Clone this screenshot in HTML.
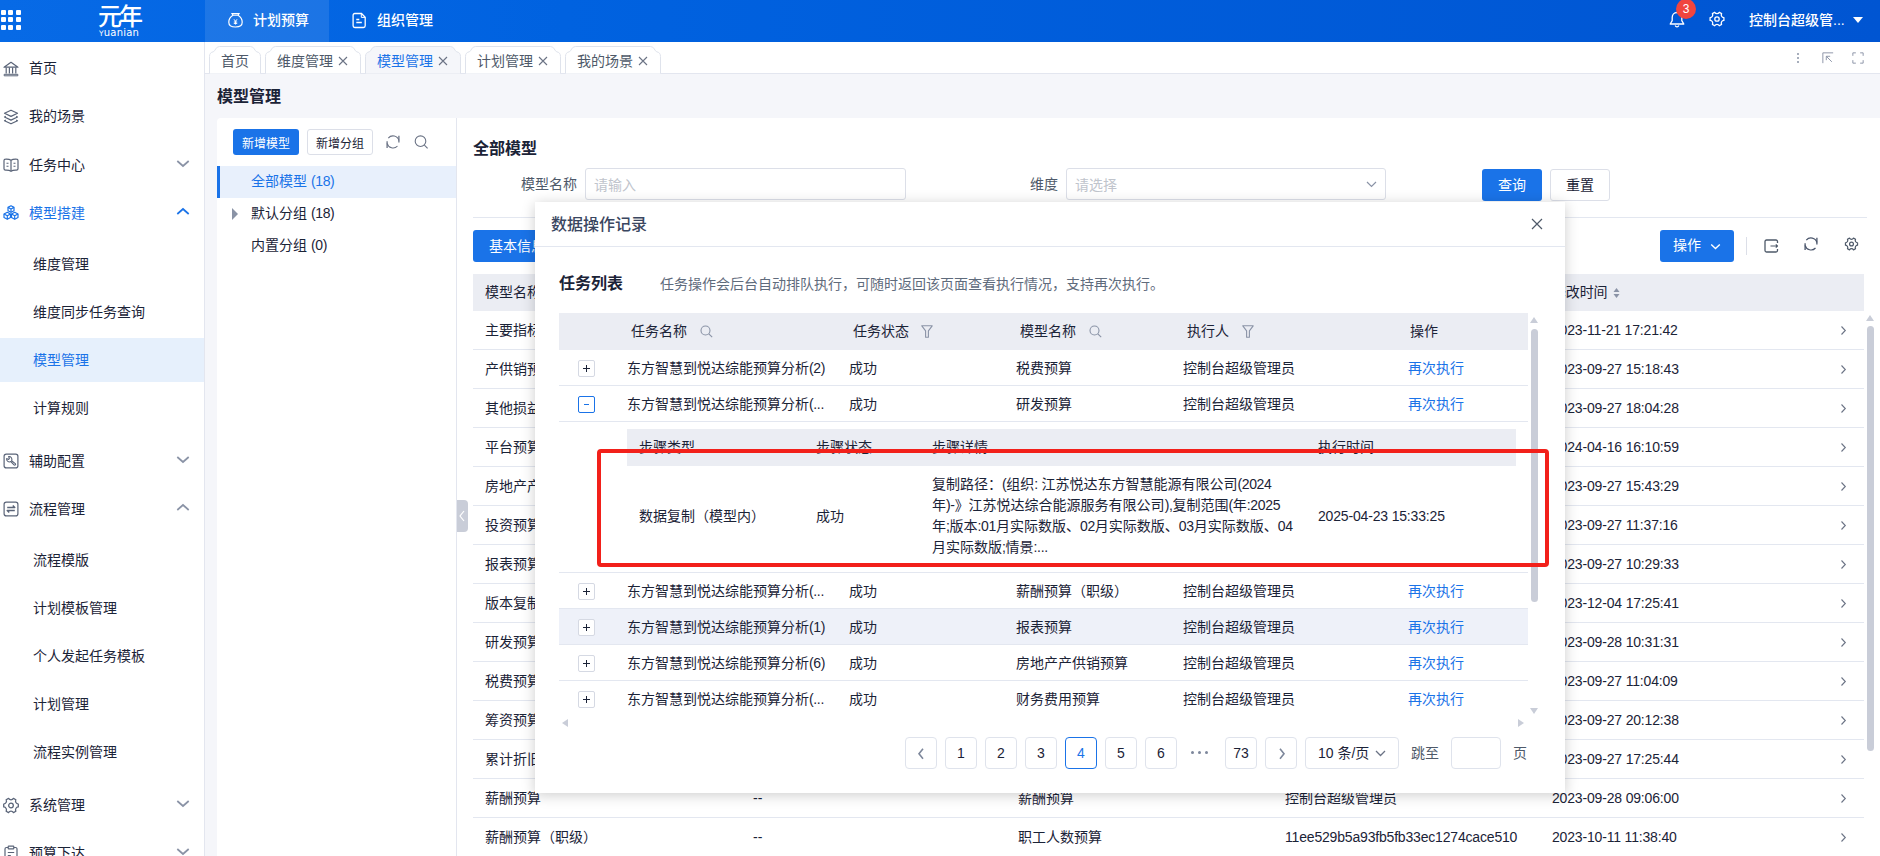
<!DOCTYPE html>
<html lang="zh-CN">
<head>
<meta charset="utf-8">
<title>模型管理</title>
<style>
*{box-sizing:border-box;margin:0;padding:0}
html,body{width:1880px;height:856px;overflow:hidden;background:#fff}
body{font-family:"Liberation Sans","Noto Sans CJK SC",sans-serif;font-size:14px;color:#1b2337;position:relative;-webkit-font-smoothing:antialiased}
.abs{position:absolute}
svg{display:block}
/* ---------- top bar ---------- */
#top{position:absolute;left:0;top:0;width:1880px;height:42px;background:linear-gradient(90deg,#076ae6 0%,#0062e0 30%,#0055d2 100%);color:#fff}
#top .grid{position:absolute;left:0;top:10px;width:21px;height:21px}
#top .grid i{position:absolute;width:5px;height:5px;background:#fff;border-radius:1px}
#top .logo{position:absolute;left:98px;top:2px;width:46px;height:36px}
#top .nav{position:absolute;top:0;height:42px;font-size:14px;line-height:40px;color:#fff;font-weight:500}
#top .nav.on{background:rgba(255,255,255,.1)}
#top .nav svg{position:absolute;top:12px}
/* ---------- sidebar ---------- */
#side{position:absolute;left:0;top:42px;width:205px;height:814px;background:#fff;border-right:1px solid #e3e6ef}
#side .it{position:absolute;left:0;width:204px;height:44px;line-height:44px;font-size:14px;color:#1b2337}
#side .it .t{position:absolute;left:29px;top:0;white-space:nowrap}
#side .it.sub .t{left:33px}
#side .it.act{background:#e6f0fc;color:#1a73e8}
#side .it.blue{color:#1a73e8}
#side .it svg.ic{position:absolute;left:3px;top:14px}
#side .it svg.ch{position:absolute;left:176px;top:16px}
/* ---------- tab strip ---------- */
#tabs{position:absolute;left:205px;top:42px;width:1675px;height:32px;background:#fff;border-bottom:1px solid #e3e6ef}
#tabs .tb{position:absolute;top:4px;height:28px;font-size:14px;line-height:30px;color:#4e5969;white-space:nowrap}
#tabs .tb.on{color:#1a73e8}
#tabs .tb .x{position:absolute;top:8px}
#main{position:absolute;left:205px;top:74px;width:1675px;height:782px;background:#f5f6fa}

/* ---------- main ---------- */
#main .ptitle{position:absolute;left:12px;top:10px;font-size:16px;font-weight:700;line-height:26px;color:#1b2337}
#card{position:absolute;left:12px;top:44px;width:1663px;height:738px;background:#fff;border-radius:4px 0 0 0}
#lp{position:absolute;left:0;top:0;width:240px;height:738px;border-right:1px solid #e3e6ef}
.btn{position:absolute;border-radius:3px;text-align:center;white-space:nowrap}
.btn.pri{background:#1a73e8;color:#fff}
.btn.def{background:#fff;border:1px solid #dcdfe8;color:#1b2337}
#lp .tr{position:absolute;left:0;width:239px;height:32px;line-height:31px;font-size:14px;color:#1b2337}
#lp .tr span{position:absolute;left:34px;white-space:nowrap}
#lp .tr.on{background:#e8f0fc;color:#1a73e8;border-left:3px solid #1a73e8}
#lp .tr.on span{left:31px}
#rp{position:absolute;left:240px;top:0;width:1423px;height:738px}
#rp .h2{position:absolute;left:16px;top:18px;font-size:16px;font-weight:700;line-height:26px}
#rp .lab{position:absolute;top:50px;height:32px;line-height:33px;font-size:14px;color:#4e5969}
#rp .inp{position:absolute;top:50px;height:32px;border:1px solid #dcdfe8;border-radius:3px;background:#fff;line-height:33px;font-size:14px;color:#c0c4cc;padding-left:8px}
#mt{position:absolute;left:16px;top:156px;width:1391px}
#mt .hd{position:absolute;left:0;top:0;width:1391px;height:37px;background:#ebedf3;line-height:36px;font-size:14px;color:#1b2337}
#mt .r{position:absolute;left:0;width:1391px;height:39px;border-bottom:1px solid #e3e7f0;line-height:38px;font-size:14px;color:#1b2337}
#mt span{position:absolute;top:0;white-space:nowrap}
#mt .c1{left:12px}#mt .c2{left:280px}#mt .c3{left:545px}#mt .c4{left:812px}#mt .c5{left:1079px;letter-spacing:-.17px}
#mt .ar{position:absolute;left:1366px;top:14px}

/* ---------- modal ---------- */
#md{position:absolute;left:535px;top:202px;width:1030px;height:591px;background:#fff;box-shadow:0 2px 13px rgba(0,0,0,.20);color:#1b2337}
#md .mh{position:absolute;left:0;top:0;width:1030px;height:45px;border-bottom:1px solid #e3e7f0}
#md .mh .tt{position:absolute;left:16px;top:10px;font-size:16px;font-weight:500;line-height:26px;color:#3a4660}
#md span{white-space:nowrap}
#tk{position:absolute;left:24px;top:111px;width:969px}
#tk .hd{position:absolute;left:0;top:0;width:969px;height:37px;background:#ebedf3;line-height:36px;font-size:14px}
#tk .hd span,#tk .r span{position:absolute;top:0}
#tk .r{position:absolute;left:0;width:969px;height:36px;border-bottom:1px solid #e3e7f0;line-height:36px;font-size:14px}
#tk .r.hl{background:#eef1f9}
#tk .ex{position:absolute;left:19px;top:10px;width:17px;height:17px;border:1px solid #d5d9e3;border-radius:2px;background:#fff}
#tk .ex.on{border-color:#1a73e8}
#tk .ex i{position:absolute;background:#1b2337}
#tk .ex.on i{background:#1a73e8}
#tk .a{color:#1a73e8}
#pg{position:absolute;left:0;top:535px;width:1030px;height:32px;font-size:14px;color:#1b2337}
#pg .b{position:absolute;top:0;width:32px;height:32px;border:1px solid #dfe3ec;border-radius:4px;background:#fff;text-align:center;line-height:30px}
#pg .b.on{border-color:#1a73e8;color:#1a73e8}
.n{letter-spacing:-.350px}
</style>
</head>
<body>
<!-- TOPBAR -->
<div id="top">
  <div class="grid">
    <i style="left:1px;top:0"></i><i style="left:8.300px;top:0"></i><i style="left:15.600px;top:0"></i>
    <i style="left:1px;top:7.400px"></i><i style="left:8.300px;top:7.400px"></i><i style="left:15.600px;top:7.400px"></i>
    <i style="left:1px;top:14.700px"></i><i style="left:8.300px;top:14.700px"></i><i style="left:15.600px;top:14.700px"></i>
  </div>
  <div class="logo">
    <div class="abs" style="left:0;top:1px;font-size:24px;line-height:28px;font-weight:500;letter-spacing:-3px;white-space:nowrap">元年</div>
    <div class="abs" style="left:1px;top:25px;font-family:'DejaVu Sans',sans-serif;font-size:10px;line-height:12px;letter-spacing:.200px;white-space:nowrap"><span style="font-size:7.500px">Y</span>uanian</div>
  </div>
  <div class="nav on" style="left:205px;width:124px">
    <svg style="left:22px" width="17" height="17" viewBox="0 0 17 17" fill="none" stroke="#fff" stroke-width="1.2"><path d="M6 3.2 5 1.5h7L11 3.2"/><path d="M6 3.2C3.5 4.6 1.8 7.3 1.8 10.2c0 3 2 4.8 6.7 4.8s6.7-1.800 6.700-4.800c0-2.900-1.700-5.600-4.200-7z"/><path d="M7 7.300 8.500 9.300 10 7.300M8.500 9.300v3.200M6.800 10h3.400M6.800 11.400h3.400" stroke-width="1"/></svg>
    <span class="abs" style="left:48px;top:0">计划预算</span>
  </div>
  <div class="nav" style="left:329px;width:124px">
    <svg style="left:23px" width="15" height="17" viewBox="0 0 15 17" fill="none" stroke="#fff" stroke-width="1.3"><path d="M2.800 1.500h6.700l3.700 3.700v8.600a1.700 1.700 0 0 1-1.700 1.700H2.800a1.700 1.700 0 0 1-1.700-1.700V3.200A1.700 1.700 0 0 1 2.800 1.500z"/><path d="M9.300 1.700v3.700h3.700" stroke-width="1"/><path d="M4.300 7.500h3M4.300 10.500h5.500"/></svg>
    <span class="abs" style="left:48px;top:0">组织管理</span>
  </div>
  <svg class="abs" style="left:1668px;top:11px" width="18" height="17" viewBox="0 0 18 17" fill="none" stroke="#fff" stroke-width="1.300" stroke-linejoin="round"><path d="M9 1.500c-2.800 0-4.800 2.100-4.800 4.900v3.200L2.200 13h13.600l-2-3.400V6.400c0-2.800-2-4.900-4.800-4.900z"/><path d="M7.200 14.500c.3.800 1 1.300 1.800 1.300s1.500-.5 1.800-1.300"/></svg>
  <div class="abs" style="left:1676px;top:-1px;width:20px;height:20px;border-radius:10px;background:#f0453f;color:#fff;font-size:12px;line-height:21px;text-align:center">3</div>
  <svg class="abs" style="left:1708px;top:11px" width="18" height="16" viewBox="0 0 17 16" fill="none" stroke="#fff" stroke-width="1.300" stroke-linejoin="round"><path d="M6.200 1.300c.6.900 1.500 1.300 2.300 1.300s1.700-.4 2.300-1.300l2.300 1.300c-.5 1-.4 1.900 0 2.600.4.700 1.200 1.300 2.300 1.400v2.800c-1.100.1-1.900.7-2.300 1.400-.4.700-.5 1.600 0 2.600l-2.300 1.300c-.6-.9-1.500-1.300-2.300-1.300s-1.700.4-2.300 1.300l-2.300-1.300c.5-1 .4-1.900 0-2.600-.4-.7-1.200-1.300-2.300-1.400V6.600c1.100-.1 1.900-.7 2.300-1.400.4-.7.5-1.600 0-2.600z"/><circle cx="8.500" cy="8" r="2.200"/></svg>
  <div class="abs" style="left:1749px;top:0;height:42px;line-height:40px;font-size:14px;font-weight:500;white-space:nowrap">控制台超级管...</div>
  <div class="abs" style="left:1853px;top:17px;width:0;height:0;border-left:5px solid transparent;border-right:5px solid transparent;border-top:6px solid #fff"></div>
</div>

<!-- SIDEBAR -->
<div id="side">
  <div class="it" style="top:3.5px"><svg class="ic" style="top:15px" width="16" height="16" viewBox="0 0 16 16" fill="none" stroke="#5a6478" stroke-width="1.2"><path d="M1 6.200 8 1.300l7 4.900z" stroke-linejoin="round"/><path d="M3.200 6.500v6M6.400 6.500v6M9.600 6.500v6M12.800 6.500v6"/><path d="M1.200 13.300h13.600v1.500H1.200z" stroke-width="1"/></svg><span class="t">首页</span></div>
  <div class="it" style="top:52px"><svg class="ic" style="top:15px" width="16" height="16" viewBox="0 0 16 16" fill="none" stroke="#5a6478" stroke-width="1.2" stroke-linejoin="round"><path d="M8 1.200 14.500 4.300 8 7.400 1.500 4.300z"/><path d="M2.800 7.300 1.500 8 8 11.100 14.500 8l-1.300-.7"/><path d="M2.800 11 1.500 11.700 8 14.800l6.500-3.100-1.300-.7"/></svg><span class="t">我的场景</span></div>
  <div class="it" style="top:100.5px"><svg class="ic" width="16" height="16" viewBox="0 0 16 16" fill="none" stroke="#5a6478" stroke-width="1.2" stroke-linejoin="round"><path d="M8 3.200C6.800 2.300 4.800 2 2.500 2.100 1.700 2.100 1 2.700 1 3.500v8.300c0 .8.700 1.300 1.500 1.300 2.300-.1 4.300.2 5.500 1.100 1.200-.9 3.200-1.200 5.500-1.100.8 0 1.500-.5 1.500-1.300V3.500c0-.8-.7-1.400-1.500-1.400C11.200 2 9.200 2.300 8 3.200z"/><path d="M8 3.200v11"/><path d="M3.500 6.200h2M3.500 9.200h2M10.500 6.200h2M10.500 9.200h2" stroke-width="1.100"/></svg><span class="t">任务中心</span><svg class="ch" width="14" height="9" viewBox="0 0 14 9" fill="none" stroke="#8a93a6" stroke-width="1.700"><path d="M1.300 2 7 7l5.700-5"/></svg></div>
  <div class="it blue" style="top:148.5px"><svg class="ic" width="16" height="16" viewBox="0 0 16 16" fill="none" stroke="#1a73e8" stroke-width="1.200" stroke-linejoin="round"><path d="M8 .800 11 2.400v3.300L8 7.300 5 5.700V2.400z"/><path d="M5 2.400 8 4l3-1.600M8 4v3.300"/><path d="M4.300 7.300 7.500 9v3.500l-3.200 1.700L1 12.500V9z"/><path d="M1 9l3.300 1.700L7.500 9M4.300 10.700v3.500"/><path d="M11.700 7.300 15 9v3.500l-3.300 1.700-3.200-1.700V9z"/><path d="M8.500 9l3.200 1.700L15 9M11.700 10.700v3.500"/></svg><span class="t">模型搭建</span><svg class="ch" width="14" height="9" viewBox="0 0 14 9" fill="none" stroke="#1a73e8" stroke-width="1.700"><path d="M1.300 7 7 2l5.700 5"/></svg></div>
  <div class="it sub" style="top:200px"><span class="t">维度管理</span></div>
  <div class="it sub" style="top:248px"><span class="t">维度同步任务查询</span></div>
  <div class="it sub act" style="top:296px"><span class="t">模型管理</span></div>
  <div class="it sub" style="top:344px"><span class="t">计算规则</span></div>
  <div class="it" style="top:396.5px"><svg class="ic" width="16" height="16" viewBox="0 0 16 16" fill="none" stroke="#5a6478" stroke-width="1.200" stroke-linejoin="round"><rect x="1.100" y="1.100" width="13.800" height="13.800" rx="2.200"/><path d="M5.600 3.600 6.400 5.600 5.600 6.400 3.600 5.600A2.900 2.900 0 0 0 7.800 8.600L11 11.900a.9.900 0 0 0 1.300-1.300L8.600 7.800A2.900 2.900 0 0 0 5.600 3.600z" stroke-width="1.100"/></svg><span class="t">辅助配置</span><svg class="ch" width="14" height="9" viewBox="0 0 14 9" fill="none" stroke="#8a93a6" stroke-width="1.700"><path d="M1.300 2 7 7l5.700-5"/></svg></div>
  <div class="it" style="top:444.5px"><svg class="ic" width="16" height="16" viewBox="0 0 16 16" fill="none" stroke="#5a6478" stroke-width="1.200" stroke-linejoin="round"><rect x="1.100" y="1.100" width="13.800" height="13.800" rx="2.200"/><path d="M4.200 6.500h7.600L9.800 4.500M11.800 9.500H4.200l2 2" stroke-width="1.400"/></svg><span class="t">流程管理</span><svg class="ch" width="14" height="9" viewBox="0 0 14 9" fill="none" stroke="#8a93a6" stroke-width="1.700"><path d="M1.300 7 7 2l5.700 5"/></svg></div>
  <div class="it sub" style="top:496px"><span class="t">流程模版</span></div>
  <div class="it sub" style="top:544px"><span class="t">计划模板管理</span></div>
  <div class="it sub" style="top:592px"><span class="t">个人发起任务模板</span></div>
  <div class="it sub" style="top:640px"><span class="t">计划管理</span></div>
  <div class="it sub" style="top:688px"><span class="t">流程实例管理</span></div>
  <div class="it" style="top:741px"><svg class="ic" style="left:2px;top:13.500px" width="18" height="17" viewBox="0 0 17 16" fill="none" stroke="#5a6478" stroke-width="1.200" stroke-linejoin="round"><path d="M6.200 1.300c.6.900 1.500 1.300 2.300 1.300s1.700-.4 2.300-1.300l2.300 1.300c-.5 1-.4 1.900 0 2.600.4.700 1.200 1.300 2.300 1.400v2.800c-1.100.1-1.900.7-2.300 1.400-.4.700-.5 1.600 0 2.600l-2.300 1.300c-.6-.9-1.500-1.300-2.300-1.300s-1.700.4-2.300 1.300l-2.300-1.300c.5-1 .4-1.900 0-2.600-.4-.7-1.200-1.300-2.300-1.400V6.600c1.100-.1 1.900-.7 2.300-1.400.4-.7.500-1.600 0-2.600z"/><circle cx="8.500" cy="8" r="2.200"/></svg><span class="t">系统管理</span><svg class="ch" width="14" height="9" viewBox="0 0 14 9" fill="none" stroke="#8a93a6" stroke-width="1.700"><path d="M1.300 2 7 7l5.700-5"/></svg></div>
  <div class="it" style="top:789px"><svg class="ic" width="16" height="16" viewBox="0 0 16 16" fill="none" stroke="#5a6478" stroke-width="1.200" stroke-linejoin="round"><path d="M5.200 2.500H3.500A1.500 1.500 0 0 0 2 4v10a1.500 1.500 0 0 0 1.500 1.500h9A1.500 1.500 0 0 0 14 14V4a1.500 1.500 0 0 0-1.500-1.500h-1.700"/><rect x="5.200" y="1.200" width="5.600" height="2.600" rx=".6"/><path d="M4.800 7.500h6.400M4.800 10.500h3"/></svg><span class="t">预算下达</span><svg class="ch" width="14" height="9" viewBox="0 0 14 9" fill="none" stroke="#8a93a6" stroke-width="1.700"><path d="M1.300 2 7 7l5.700-5"/></svg></div>
</div>

<!-- TABS -->
<div id="tabs">
  <div class="tb" style="left:4px;width:52px"><svg class="abs" style="left:0;top:0" width="52" height="28" viewBox="0 0 52 28"><path d="M0.500 27.500V10.500C0.500 7.500 2 6.300 4.200 5.800C6.500 5.200 6.500 0.500 10.500 0.500H41.5C45.5 0.500 45.5 5.200 47.8 5.800C50 6.300 51.5 7.500 51.5 10.500V27.500" fill="#fff" stroke="#dfe3ec" stroke-width="1"/></svg><span class="abs" style="left:12px;top:0">首页</span></div>
  <div class="tb" style="left:60px;width:96px"><svg class="abs" style="left:0;top:0" width="96" height="28" viewBox="0 0 96 28"><path d="M0.500 27.500V10.500C0.500 7.500 2 6.300 4.200 5.800C6.500 5.200 6.500 0.500 10.500 0.500H85.5C89.5 0.500 89.5 5.200 91.8 5.800C94 6.300 95.5 7.500 95.5 10.500V27.500" fill="#fff" stroke="#dfe3ec" stroke-width="1"/></svg><span class="abs" style="left:12px;top:0">维度管理</span><svg class="abs x" style="left:73px;top:10px" width="10" height="10" viewBox="0 0 10 10" stroke="#6b7385" stroke-width="1.100" fill="none"><path d="M1 1l8 8M9 1l-8 8"/></svg></div>
  <div class="tb on" style="left:160px;width:96px"><svg class="abs" style="left:0;top:0" width="96" height="28" viewBox="0 0 96 28"><path d="M0.500 27.500V10.500C0.500 7.500 2 6.300 4.200 5.800C6.500 5.200 6.500 0.500 10.500 0.500H85.5C89.5 0.500 89.5 5.200 91.8 5.800C94 6.300 95.5 7.500 95.5 10.500V27.500" fill="#f5f6fa" stroke="#dfe3ec" stroke-width="1"/></svg><span class="abs" style="left:12px;top:0">模型管理</span><svg class="abs x" style="left:73px;top:10px" width="10" height="10" viewBox="0 0 10 10" stroke="#6b7385" stroke-width="1.100" fill="none"><path d="M1 1l8 8M9 1l-8 8"/></svg></div>
  <div class="tb" style="left:260px;width:96px"><svg class="abs" style="left:0;top:0" width="96" height="28" viewBox="0 0 96 28"><path d="M0.500 27.500V10.500C0.500 7.500 2 6.300 4.200 5.800C6.500 5.200 6.500 0.500 10.500 0.500H85.5C89.5 0.500 89.5 5.200 91.8 5.800C94 6.300 95.5 7.500 95.5 10.500V27.500" fill="#fff" stroke="#dfe3ec" stroke-width="1"/></svg><span class="abs" style="left:12px;top:0">计划管理</span><svg class="abs x" style="left:73px;top:10px" width="10" height="10" viewBox="0 0 10 10" stroke="#6b7385" stroke-width="1.100" fill="none"><path d="M1 1l8 8M9 1l-8 8"/></svg></div>
  <div class="tb" style="left:360px;width:96px"><svg class="abs" style="left:0;top:0" width="96" height="28" viewBox="0 0 96 28"><path d="M0.500 27.500V10.500C0.500 7.500 2 6.300 4.200 5.800C6.500 5.200 6.500 0.500 10.500 0.500H85.5C89.5 0.500 89.5 5.200 91.8 5.800C94 6.300 95.5 7.500 95.5 10.500V27.500" fill="#fff" stroke="#dfe3ec" stroke-width="1"/></svg><span class="abs" style="left:12px;top:0">我的场景</span><svg class="abs x" style="left:73px;top:10px" width="10" height="10" viewBox="0 0 10 10" stroke="#6b7385" stroke-width="1.100" fill="none"><path d="M1 1l8 8M9 1l-8 8"/></svg></div>
  <svg class="abs" style="left:1591px;top:10px" width="4" height="12" viewBox="0 0 4 12" fill="#8a93a6"><circle cx="2" cy="2" r="1"/><circle cx="2" cy="6" r="1"/><circle cx="2" cy="10" r="1"/></svg>
  <svg class="abs" style="left:1617px;top:10px" width="12" height="12" viewBox="0 0 14 14" fill="none" stroke="#8a93a6" stroke-width="1.100"><path d="M1 13V1h12"/><path d="M11.500 11.500 5 5M5 9.500V5h4.500"/></svg>
  <svg class="abs" style="left:1647px;top:10px" width="12" height="12" viewBox="0 0 14 14" fill="none" stroke="#8a93a6" stroke-width="1.100"><path d="M1 4.500V1h3.500M9.500 1H13v3.500M13 9.500V13H9.500M4.500 13H1V9.500"/></svg>
</div>

<!-- MAIN -->
<div id="main">
  <div class="ptitle">模型管理</div>
  <div id="card">
    <div id="lp">
      <div class="btn pri" style="left:16px;top:11px;width:66px;height:26px;line-height:30px;font-size:12px">新增模型</div>
      <div class="btn def" style="left:90px;top:11px;width:66px;height:26px;line-height:28px;font-size:12px">新增分组</div>
      <svg class="abs" style="left:169px;top:17px;color:#6b7385" width="14" height="14" viewBox="0 0 14 14" fill="none" stroke="#6b7385" stroke-width="1.100"><path d="M2.300 3.100A6.100 6.100 0 0 1 12.900 5.500M1.100 8.400A6.100 6.100 0 0 0 11.500 11"/><path d="M12.900 .800V7.600M1.100 6.200V13" stroke-width="1.300"/></svg>
      <svg class="abs" style="left:197px;top:17px" width="15" height="15" viewBox="0 0 15 15" fill="none" stroke="#6b7385" stroke-width="1.100"><circle cx="6.500" cy="6.200" r="5.300"/><path d="M10.400 10.100l3.200 3.300"/></svg>
      <div class="tr on" style="top:48px"><span>全部模型 <b class="n" style="font-weight:400">(18)</b></span></div>
      <div class="tr" style="top:80px"><i class="abs" style="left:15px;top:10px;width:0;height:0;border-top:6px solid transparent;border-bottom:6px solid transparent;border-left:6.500px solid #8a93a6"></i><span>默认分组 <b class="n" style="font-weight:400">(18)</b></span></div>
      <div class="tr" style="top:112px"><span>内置分组 <b class="n" style="font-weight:400">(0)</b></span></div>
    </div>
    <div id="rp">
      <div class="abs" style="left:0;top:382px;width:11px;height:32px;background:#c9cdd8;border-radius:0 4px 4px 0"><svg class="abs" style="left:2px;top:10px" width="6" height="12" viewBox="0 0 6 12" fill="none" stroke="#fff" stroke-width="1.200"><path d="M5 1 1 6l4 5"/></svg></div>
      <div class="h2">全部模型</div>
      <div class="lab" style="left:64px">模型名称</div>
      <div class="inp" style="left:128px;width:321px">请输入</div>
      <div class="lab" style="left:573px">维度</div>
      <div class="inp" style="left:609px;width:320px">请选择<svg class="abs" style="left:299px;top:12px" width="11" height="7" viewBox="0 0 11 7" fill="none" stroke="#8a93a6" stroke-width="1.200"><path d="M1 1l4.500 4.500L10 1"/></svg></div>
      <div class="btn pri" style="left:1025px;top:51px;width:60px;height:32px;line-height:33px;font-size:14px">查询</div>
      <div class="btn def" style="left:1093px;top:51px;width:60px;height:32px;line-height:31px;font-size:14px">重置</div>
      <div class="abs" style="left:16px;top:99px;width:1394px;height:1px;background:#e3e7f0"></div>
      <div class="btn pri" style="left:16px;top:112px;width:88px;height:32px;line-height:32px;font-size:14px">基本信息</div>
      <div class="btn pri" style="left:1203px;top:112px;width:74px;height:32px;line-height:31px;font-size:14px;text-align:left;padding-left:13px">操作<svg class="abs" style="left:50px;top:13px" width="11" height="7" viewBox="0 0 11 7" fill="none" stroke="#fff" stroke-width="1.400"><path d="M1.200 1.500 5.500 5.500l4.300-4"/></svg></div>
      <div class="abs" style="left:1289px;top:119px;width:1px;height:18px;background:#dcdfe8"></div>
      <svg class="abs" style="left:1307px;top:121px" width="15" height="14" viewBox="0 0 15 14" fill="none" stroke="#4e5969" stroke-width="1.300" stroke-linejoin="round"><path d="M13.500 4V2.500A1.500 1.500 0 0 0 12 1H2.500A1.500 1.500 0 0 0 1 2.500v9A1.500 1.500 0 0 0 2.500 13H12a1.500 1.500 0 0 0 1.500-1.500V10"/><path d="M6.500 7h7M11.800 5.300 13.500 7l-1.700 1.700" stroke-width="1.100"/></svg>
      <svg class="abs" style="left:1347px;top:119px;color:#4a556b" width="14" height="14" viewBox="0 0 14 14" fill="none" stroke="#4a556b" stroke-width="1.200"><path d="M2.300 3.100A6.100 6.100 0 0 1 12.900 5.500M1.100 8.400A6.100 6.100 0 0 0 11.500 11"/><path d="M12.900 .800V7.600M1.100 6.200V13" stroke-width="1.300"/></svg>
      <svg class="abs" style="left:1387px;top:119px" width="15" height="14" viewBox="0 0 17 16" fill="none" stroke="#4e5969" stroke-width="1.400" stroke-linejoin="round"><path d="M6.200 1.300c.6.900 1.500 1.300 2.300 1.300s1.700-.4 2.300-1.300l2.300 1.300c-.5 1-.4 1.900 0 2.600.4.700 1.200 1.300 2.300 1.400v2.800c-1.100.1-1.900.7-2.300 1.400-.4.700-.5 1.600 0 2.600l-2.300 1.300c-.6-.9-1.500-1.300-2.300-1.300s-1.700.4-2.300 1.300l-2.300-1.300c.5-1 .4-1.900 0-2.600-.4-.7-1.200-1.300-2.300-1.400V6.600c1.100-.1 1.900-.7 2.300-1.400.4-.7.500-1.600 0-2.600z"/><circle cx="8.500" cy="8" r="2.200"/></svg>
      <div id="mt">
        <div class="hd"><span class="c1">模型名称</span><span class="c2">描述</span><span class="c3">关联模型</span><span class="c4">修改人</span><span class="c5">修改时间</span><svg class="abs" style="left:1140px;top:14px" width="7" height="10" viewBox="0 0 7 10" fill="#8a93a6"><path d="M3.500 0 6.500 4h-6zM3.500 10 .5 6h6z"/></svg></div>
                <div class="r" style="top:37px"><span class="c1">主要指标预算</span><span class="c2">--</span><span class="c3">主要指标预算</span><span class="c4">控制台超级管理员</span><span class="c5">2023-11-21 17:21:42</span><svg class="ar" width="8" height="11" viewBox="0 0 8 11" fill="none" stroke="#6b7385" stroke-width="1.100"><path d="M2.500 1.500 6.300 5.500 2.500 9.500"/></svg></div>
        <div class="r" style="top:76px"><span class="c1">产供销预算</span><span class="c2">--</span><span class="c3">产供销预算</span><span class="c4">控制台超级管理员</span><span class="c5">2023-09-27 15:18:43</span><svg class="ar" width="8" height="11" viewBox="0 0 8 11" fill="none" stroke="#6b7385" stroke-width="1.100"><path d="M2.500 1.500 6.300 5.500 2.500 9.500"/></svg></div>
        <div class="r" style="top:115px"><span class="c1">其他损益预算</span><span class="c2">--</span><span class="c3">其他损益预算</span><span class="c4">控制台超级管理员</span><span class="c5">2023-09-27 18:04:28</span><svg class="ar" width="8" height="11" viewBox="0 0 8 11" fill="none" stroke="#6b7385" stroke-width="1.100"><path d="M2.500 1.500 6.300 5.500 2.500 9.500"/></svg></div>
        <div class="r" style="top:154px"><span class="c1">平台预算</span><span class="c2">--</span><span class="c3">平台预算</span><span class="c4">控制台超级管理员</span><span class="c5">2024-04-16 16:10:59</span><svg class="ar" width="8" height="11" viewBox="0 0 8 11" fill="none" stroke="#6b7385" stroke-width="1.100"><path d="M2.500 1.500 6.300 5.500 2.500 9.500"/></svg></div>
        <div class="r" style="top:193px"><span class="c1">房地产产供销预算</span><span class="c2">--</span><span class="c3">房地产产供销预算</span><span class="c4">控制台超级管理员</span><span class="c5">2023-09-27 15:43:29</span><svg class="ar" width="8" height="11" viewBox="0 0 8 11" fill="none" stroke="#6b7385" stroke-width="1.100"><path d="M2.500 1.500 6.300 5.500 2.500 9.500"/></svg></div>
        <div class="r" style="top:232px"><span class="c1">投资预算</span><span class="c2">--</span><span class="c3">投资预算</span><span class="c4">控制台超级管理员</span><span class="c5">2023-09-27 11:37:16</span><svg class="ar" width="8" height="11" viewBox="0 0 8 11" fill="none" stroke="#6b7385" stroke-width="1.100"><path d="M2.500 1.500 6.300 5.500 2.500 9.500"/></svg></div>
        <div class="r" style="top:271px"><span class="c1">报表预算</span><span class="c2">--</span><span class="c3">报表预算</span><span class="c4">控制台超级管理员</span><span class="c5">2023-09-27 10:29:33</span><svg class="ar" width="8" height="11" viewBox="0 0 8 11" fill="none" stroke="#6b7385" stroke-width="1.100"><path d="M2.500 1.500 6.300 5.500 2.500 9.500"/></svg></div>
        <div class="r" style="top:310px"><span class="c1">版本复制</span><span class="c2">--</span><span class="c3">版本复制</span><span class="c4">控制台超级管理员</span><span class="c5">2023-12-04 17:25:41</span><svg class="ar" width="8" height="11" viewBox="0 0 8 11" fill="none" stroke="#6b7385" stroke-width="1.100"><path d="M2.500 1.500 6.300 5.500 2.500 9.500"/></svg></div>
        <div class="r" style="top:349px"><span class="c1">研发预算</span><span class="c2">--</span><span class="c3">研发预算</span><span class="c4">控制台超级管理员</span><span class="c5">2023-09-28 10:31:31</span><svg class="ar" width="8" height="11" viewBox="0 0 8 11" fill="none" stroke="#6b7385" stroke-width="1.100"><path d="M2.500 1.500 6.300 5.500 2.500 9.500"/></svg></div>
        <div class="r" style="top:388px"><span class="c1">税费预算</span><span class="c2">--</span><span class="c3">税费预算</span><span class="c4">控制台超级管理员</span><span class="c5">2023-09-27 11:04:09</span><svg class="ar" width="8" height="11" viewBox="0 0 8 11" fill="none" stroke="#6b7385" stroke-width="1.100"><path d="M2.500 1.500 6.300 5.500 2.500 9.500"/></svg></div>
        <div class="r" style="top:427px"><span class="c1">筹资预算</span><span class="c2">--</span><span class="c3">筹资预算</span><span class="c4">控制台超级管理员</span><span class="c5">2023-09-27 20:12:38</span><svg class="ar" width="8" height="11" viewBox="0 0 8 11" fill="none" stroke="#6b7385" stroke-width="1.100"><path d="M2.500 1.500 6.300 5.500 2.500 9.500"/></svg></div>
        <div class="r" style="top:466px"><span class="c1">累计折旧预算</span><span class="c2">--</span><span class="c3">累计折旧预算</span><span class="c4">控制台超级管理员</span><span class="c5">2023-09-27 17:25:44</span><svg class="ar" width="8" height="11" viewBox="0 0 8 11" fill="none" stroke="#6b7385" stroke-width="1.100"><path d="M2.500 1.500 6.300 5.500 2.500 9.500"/></svg></div>
        <div class="r" style="top:505px"><span class="c1">薪酬预算</span><span class="c2">--</span><span class="c3">薪酬预算</span><span class="c4">控制台超级管理员</span><span class="c5">2023-09-28 09:06:00</span><svg class="ar" width="8" height="11" viewBox="0 0 8 11" fill="none" stroke="#6b7385" stroke-width="1.100"><path d="M2.500 1.500 6.300 5.500 2.500 9.500"/></svg></div>
        <div class="r" style="top:544px"><span class="c1">薪酬预算（职级）</span><span class="c2">--</span><span class="c3">职工人数预算</span><span class="c4" style="letter-spacing:-.18px">11ee529b5a93fb5fb33ec1274cace510</span><span class="c5">2023-10-11 11:38:40</span><svg class="ar" width="8" height="11" viewBox="0 0 8 11" fill="none" stroke="#6b7385" stroke-width="1.100"><path d="M2.500 1.500 6.300 5.500 2.500 9.500"/></svg></div>
      </div>
      <div class="abs" style="left:1410px;top:208px;width:7px;height:425px;background:#c9cdd8;border-radius:4px"></div>
      <div class="abs" style="left:1409px;top:197px;width:0;height:0;border-left:4.500px solid transparent;border-right:4.500px solid transparent;border-bottom:6px solid #c9cdd8"></div>
    </div>
  </div>
</div>

<!-- MODAL -->
<div id="md">
  <div class="mh"><span class="tt">数据操作记录</span><svg class="abs" style="left:996px;top:16px" width="12" height="12" viewBox="0 0 12 12" fill="none" stroke="#4e5969" stroke-width="1.200"><path d="M1 1l10 10M11 1 1 11"/></svg></div>
  <span class="abs" style="left:24px;top:69px;font-size:16px;font-weight:700;line-height:26px">任务列表</span>
  <span class="abs" style="left:125px;top:70px;font-size:14px;line-height:24px;color:#5f6b7c">任务操作会后台自动排队执行，可随时返回该页面查看执行情况，支持再次执行。</span>
  <div id="tk">
    <div class="hd"><span style="left:72px">任务名称</span><svg class="abs" style="left:141px;top:12px" width="13" height="13" viewBox="0 0 13 13" fill="none" stroke="#8a93a6" stroke-width="1.100"><circle cx="5.500" cy="5.500" r="4.500"/><path d="M8.800 8.800l3.400 3.400"/></svg><span style="left:294px">任务状态</span><svg class="abs" style="left:362px;top:12px" width="12" height="13" viewBox="0 0 12 13" fill="none" stroke="#8a93a6" stroke-width="1.100" stroke-linejoin="round"><path d="M.8.800h10.400L7.400 5.800v6.400H4.600V5.800z"/></svg><span style="left:461px">模型名称</span><svg class="abs" style="left:530px;top:12px" width="13" height="13" viewBox="0 0 13 13" fill="none" stroke="#8a93a6" stroke-width="1.100"><circle cx="5.500" cy="5.500" r="4.500"/><path d="M8.800 8.800l3.400 3.400"/></svg><span style="left:628px">执行人</span><svg class="abs" style="left:683px;top:12px" width="12" height="13" viewBox="0 0 12 13" fill="none" stroke="#8a93a6" stroke-width="1.100" stroke-linejoin="round"><path d="M.8.800h10.400L7.400 5.800v6.400H4.600V5.800z"/></svg><span style="left:851px">操作</span></div>
            <div class="r" style="top:37px"><div class="ex"><i style="left:4px;top:7px;width:7px;height:1px"></i><i style="left:7px;top:4px;width:1px;height:7px"></i></div><span style="left:68px">东方智慧到悦达综能预算分析<span class="n" style="position:static">(2)</span></span><span style="left:290px">成功</span><span style="left:457px">税费预算</span><span style="left:624px">控制台超级管理员</span><span class="a" style="left:849px">再次执行</span></div>
      <div class="r" style="top:73px"><div class="ex on"><i style="left:5px;top:7px;width:5px;height:1px"></i></div><span style="left:68px">东方智慧到悦达综能预算分析<span class="n" style="position:static">(...</span></span><span style="left:290px">成功</span><span style="left:457px">研发预算</span><span style="left:624px">控制台超级管理员</span><span class="a" style="left:849px">再次执行</span></div>
      <div class="r" style="top:260px"><div class="ex"><i style="left:4px;top:7px;width:7px;height:1px"></i><i style="left:7px;top:4px;width:1px;height:7px"></i></div><span style="left:68px">东方智慧到悦达综能预算分析<span class="n" style="position:static">(...</span></span><span style="left:290px">成功</span><span style="left:457px">薪酬预算（职级）</span><span style="left:624px">控制台超级管理员</span><span class="a" style="left:849px">再次执行</span></div>
      <div class="r hl" style="top:296px"><div class="ex"><i style="left:4px;top:7px;width:7px;height:1px"></i><i style="left:7px;top:4px;width:1px;height:7px"></i></div><span style="left:68px">东方智慧到悦达综能预算分析<span class="n" style="position:static">(1)</span></span><span style="left:290px">成功</span><span style="left:457px">报表预算</span><span style="left:624px">控制台超级管理员</span><span class="a" style="left:849px">再次执行</span></div>
      <div class="r" style="top:332px"><div class="ex"><i style="left:4px;top:7px;width:7px;height:1px"></i><i style="left:7px;top:4px;width:1px;height:7px"></i></div><span style="left:68px">东方智慧到悦达综能预算分析<span class="n" style="position:static">(6)</span></span><span style="left:290px">成功</span><span style="left:457px">房地产产供销预算</span><span style="left:624px">控制台超级管理员</span><span class="a" style="left:849px">再次执行</span></div>
      <div class="r" style="top:368px;border-bottom:none"><div class="ex"><i style="left:4px;top:7px;width:7px;height:1px"></i><i style="left:7px;top:4px;width:1px;height:7px"></i></div><span style="left:68px">东方智慧到悦达综能预算分析<span class="n" style="position:static">(...</span></span><span style="left:290px">成功</span><span style="left:457px">财务费用预算</span><span style="left:624px">控制台超级管理员</span><span class="a" style="left:849px">再次执行</span></div>
      <div class="abs" style="left:68px;top:116px;width:889px;height:37px;background:#ebedf3;line-height:36px;font-size:14px"><span class="abs" style="left:12px">步骤类型</span><span class="abs" style="left:189px">步骤状态</span><span class="abs" style="left:305px">步骤详情</span><span class="abs" style="left:691px">执行时间</span></div>
      <div class="abs" style="left:68px;top:153px;width:889px;height:100px;font-size:14px"><span class="abs" style="left:12px;top:39px;line-height:22px">数据复制（模型内）</span><span class="abs" style="left:189px;top:39px;line-height:22px">成功</span><div class="abs" style="left:305px;top:8px;line-height:21px;white-space:nowrap">复制路径：<span class="n">(</span>组织<span class="n">: </span>江苏悦达东方智慧能源有限公司<span class="n">(2024</span><br>年<span class="n">)-</span>》江苏悦达综合能源服务有限公司<span class="n">),</span>复制范围<span class="n">(</span>年<span class="n">:2025</span><br>年<span class="n">;</span>版本<span class="n">:01</span>月实际数版、<span class="n">02</span>月实际数版、<span class="n">03</span>月实际数版、<span class="n">04</span><br>月实际数版<span class="n">;</span>情景<span class="n">:...</span></div><span class="abs" style="left:691px;top:39px;line-height:22px;letter-spacing:-.17px">2025-04-23 15:33:25</span></div>
      <div class="abs" style="left:0;top:259px;width:969px;height:1px;background:#e3e7f0"></div>
  </div>
  <!-- scrollbars -->
  <div class="abs" style="left:996px;top:127px;width:7px;height:273px;background:#c9cdd8;border-radius:4px"></div>
  <div class="abs" style="left:995px;top:115px;width:0;height:0;border-left:4.500px solid transparent;border-right:4.500px solid transparent;border-bottom:6px solid #c9cdd8"></div>
  <div class="abs" style="left:995px;top:506px;width:0;height:0;border-left:4.500px solid transparent;border-right:4.500px solid transparent;border-top:6px solid #c9cdd8"></div>
  <div class="abs" style="left:27px;top:517px;width:0;height:0;border-top:4.500px solid transparent;border-bottom:4.500px solid transparent;border-right:6px solid #c9cdd8"></div>
  <div class="abs" style="left:983px;top:517px;width:0;height:0;border-top:4.500px solid transparent;border-bottom:4.500px solid transparent;border-left:6px solid #c9cdd8"></div>
  <div id="pg"><div class="b" style="left:370px"><svg class="abs" style="left:11px;top:9px" width="8" height="13" viewBox="0 0 8 13" fill="none" stroke="#7d879b" stroke-width="1.600"><path d="M6 1.800 2 6.800l4 5"/></svg></div><div class="b" style="left:410px">1</div><div class="b" style="left:450px">2</div><div class="b" style="left:490px">3</div><div class="b on" style="left:530px">4</div><div class="b" style="left:570px">5</div><div class="b" style="left:610px">6</div><div class="abs" style="left:656px;top:14px;width:18px;height:4px"><i class="abs" style="left:0;top:0;width:3px;height:3px;border-radius:2px;background:#7d879b"></i><i class="abs" style="left:7px;top:0;width:3px;height:3px;border-radius:2px;background:#7d879b"></i><i class="abs" style="left:14px;top:0;width:3px;height:3px;border-radius:2px;background:#7d879b"></i></div><div class="b" style="left:690px">73</div><div class="b" style="left:730px"><svg class="abs" style="left:12px;top:9px" width="8" height="13" viewBox="0 0 8 13" fill="none" stroke="#7d879b" stroke-width="1.600"><path d="M2 1.800l4 5-4 5"/></svg></div><div class="b" style="left:770px;width:94px;text-align:left;padding-left:12px">10 条/页<svg class="abs" style="left:69px;top:12px" width="11" height="7" viewBox="0 0 11 7" fill="none" stroke="#6b7385" stroke-width="1.300"><path d="M1 1l4.500 4.500L10 1"/></svg></div><span class="abs" style="left:876px;top:0;line-height:32px;color:#4e5969">跳至</span><div class="b" style="left:916px;width:50px"></div><span class="abs" style="left:978px;top:0;line-height:32px;color:#4e5969">页</span></div>
</div>
<!-- red annotation box -->
<div class="abs" style="left:597px;top:449px;width:952px;height:118px;border:4px solid #f2201a;border-radius:4px"></div>

</body>
</html>
